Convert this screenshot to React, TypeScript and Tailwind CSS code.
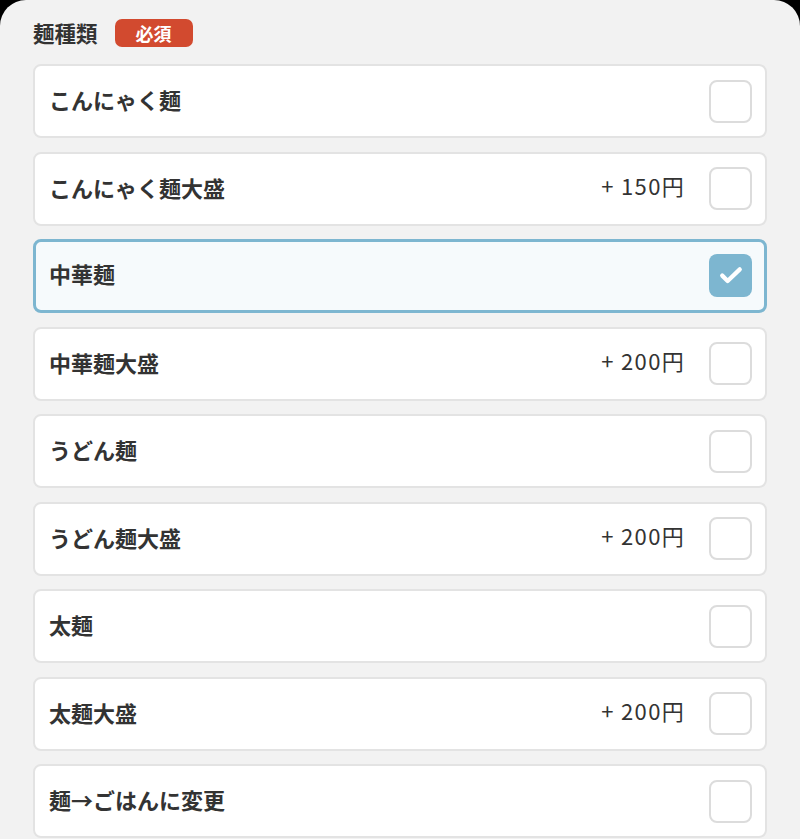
import React from 'react';

type Option = { name: string; price?: number; checked?: boolean };

const options: Option[] = [
  { name: 'こんにゃく麺' },
  { name: 'こんにゃく麺大盛', price: 150 },
  { name: '中華麺', checked: true },
  { name: '中華麺大盛', price: 200 },
  { name: 'うどん麺' },
  { name: 'うどん麺大盛', price: 200 },
  { name: '太麺' },
  { name: '太麺大盛', price: 200 },
  { name: '麺→ごはんに変更' },
];

const App: React.FC = () => {
  return (
    <div
      className="h-[839px] overflow-hidden bg-black"
      style={{ fontFamily: '"Noto Sans CJK JP", "Noto Sans", sans-serif' }}
    >
      <div className="h-full rounded-t-[26px] bg-[#f2f2f2] px-[33px] pt-[19px]">
        {/* Section header */}
        <div className="flex h-[28px] items-center gap-[17px]">
          <span className="text-[21.5px] font-bold text-[#333]">麺種類</span>
          <span className="flex h-[28px] items-center rounded-[7px] bg-[#d24a2f] px-[21px] text-[18px] font-bold text-white">
            必須
          </span>
        </div>

        {/* Options */}
        <div className="mt-[17px] flex flex-col gap-[13.5px]">
          {options.map((o) => (
            <div
              key={o.name}
              className={
                o.checked
                  ? 'flex h-[74px] items-center rounded-[8px] border-[3px] border-[#7db6d0] bg-[#f6fafc] pb-[2px] pl-[13px] pr-[12px]'
                  : 'flex h-[74px] items-center rounded-[8px] border-2 border-[#e3e3e3] bg-white pl-[14px] pr-[13px]'
              }
            >
              <span className="flex-1 pb-[3px] text-[22px] font-bold text-[#333]">{o.name}</span>
              {o.price && (
                <span className="mr-[24px] pb-[6px] text-[22px] tracking-[0.06em] text-[#333]">+ {o.price}円</span>
              )}
              {o.checked ? (
                <span className="flex h-[43px] w-[43px] items-center justify-center rounded-[8px] bg-[#7db6d0]">
                  <svg width="30" height="30" viewBox="0 0 24 24" fill="none">
                    <path
                      d="M5 12.5l4.3 4.3L19 7.5"
                      stroke="white"
                      strokeWidth="3.4"
                      strokeLinecap="round"
                      strokeLinejoin="round"
                    />
                  </svg>
                </span>
              ) : (
                <span className="h-[43px] w-[43px] rounded-[8px] border-2 border-[#dcdcdc] bg-white" />
              )}
            </div>
          ))}
        </div>
      </div>
    </div>
  );
};

export default App;
